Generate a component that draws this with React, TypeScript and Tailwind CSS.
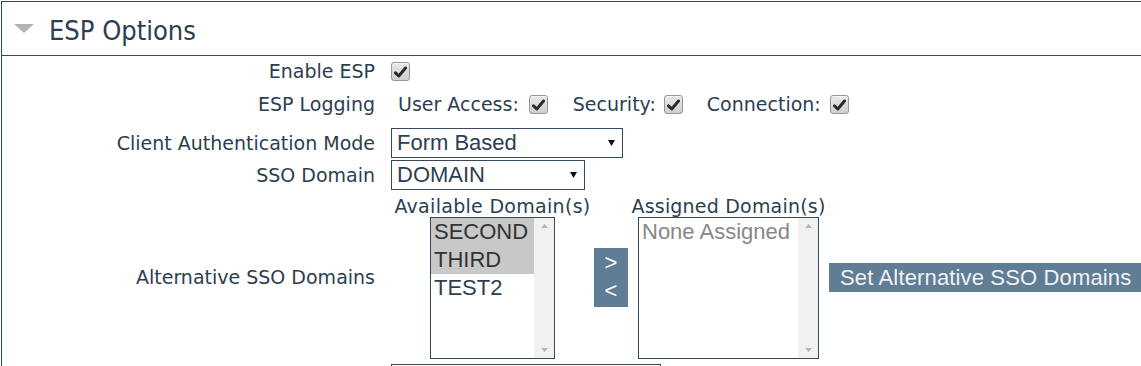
import * as React from 'react';

const LABEL_FONT = { fontFamily: '"DejaVu Sans", Verdana, sans-serif' };
const ARIAL = { fontFamily: '"Liberation Sans", Arial, sans-serif' };

function Check() {
  return (
    <span className="inline-flex h-[19px] w-[19px] items-center justify-center rounded-[3px] border border-[#969696] bg-gradient-to-b from-[#e9e9e9] to-[#d0d0d0] shadow-[inset_0_1px_0_#f6f6f6]">
      <svg width="13" height="12" viewBox="0 0 13 12">
        <path
          d="M1.5 6.8 L4.8 10 L11.5 2"
          fill="none"
          stroke="#2b2b2b"
          strokeWidth="3"
          strokeLinecap="round"
          strokeLinejoin="round"
        />
      </svg>
    </span>
  );
}

function Select({ value, width }: { value: string; width: string }) {
  return (
    <div
      className={`${width} flex h-[30px] items-center justify-between border border-[#34495e] bg-white pl-[5px] pr-[7px] text-[22px] leading-[28px] text-[#2c3e50]`}
      style={ARIAL}
    >
      <span>{value}</span>
      <svg width="7" height="6" viewBox="0 0 7 6">
        <path d="M0 0 H7 L3.5 6 Z" fill="#111" />
      </svg>
    </div>
  );
}

function ListBox({
  width,
  items,
  selected = [],
  muted = false,
}: {
  width: string;
  items: string[];
  selected?: string[];
  muted?: boolean;
}) {
  return (
    <div className={`${width} flex h-[142px] border border-[#34495e] bg-white`} style={ARIAL}>
      <div className="flex-1">
        {items.map((it) => (
          <div
            key={it}
            className={`h-[28px] pl-[3px] text-[22px] leading-[28px] ${
              selected.includes(it) ? 'bg-[#c8c8c8] text-[#333]' : ''
            } ${muted ? 'text-[#888]' : 'text-[#2c3e50]'}`}
          >
            {it}
          </div>
        ))}
      </div>
      <div className="flex w-[20px] flex-col items-center justify-between bg-[#f1f1f1] py-[6px]">
        <svg width="7" height="4" viewBox="0 0 7 4">
          <path d="M0 4 L3.5 0 L7 4 Z" fill="#b4b4b4" />
        </svg>
        <svg width="7" height="4" viewBox="0 0 7 4">
          <path d="M0 0 H7 L3.5 4 Z" fill="#b4b4b4" />
        </svg>
      </div>
    </div>
  );
}

function Row({
  label,
  className,
  children,
}: {
  label: string;
  className: string;
  children?: React.ReactNode;
}) {
  return (
    <div className={`flex items-center ${className}`}>
      <div className="w-[373px] shrink-0 text-right">{label}</div>
      <div className="ml-[16px] flex items-center">{children}</div>
    </div>
  );
}

export default function App() {
  return (
    <div
      className="h-[366px] w-[1141px] overflow-hidden bg-white text-[19px] text-[#2c3e50]"
      style={LABEL_FONT}
    >
      <div className="ml-px mt-px w-[1170px] border-l border-t border-[#34495e]">
        {/* header */}
        <div className="flex h-[54px] items-center border-b border-[#34495e] pl-[12px]">
          <svg width="20" height="9" viewBox="0 0 20 9" className="mb-[1px]">
            <path d="M0 0 H20 L10 9 Z" fill="#b3b3b3" />
          </svg>
          <span
            className="ml-[15px] pt-[6px] text-[27px] text-[#2c3e50]"
            style={{ fontFamily: '"DejaVu Sans Condensed", "DejaVu Sans", sans-serif' }}
          >
            ESP Options
          </span>
        </div>

        <Row label="Enable ESP" className="h-[31px]">
          <Check />
        </Row>

        <Row label="ESP Logging" className="h-[34px]">
          <div className="flex items-center pl-[7px]">
            <span>User Access:</span>
            <span className="ml-[10px]">
              <Check />
            </span>
            <span className="ml-[25px]">Security:</span>
            <span className="ml-[8px]">
              <Check />
            </span>
            <span className="ml-[24px]">Connection:</span>
            <span className="ml-[9px]">
              <Check />
            </span>
          </div>
        </Row>

        <Row label="Client Authentication Mode" className="mt-[7px] h-[30px]">
          <Select value="Form Based" width="w-[232px]" />
        </Row>

        <Row label="SSO Domain" className="mt-[2px] h-[30px]">
          <Select value="DOMAIN" width="w-[194px]" />
        </Row>

        {/* alternative domains */}
        <div className="flex h-[174px] items-center">
          <div className="w-[373px] shrink-0 text-right">Alternative SSO Domains</div>
          <div className="ml-[16px] flex h-full items-center">
            <div className="flex w-[203px] flex-col items-center self-start">
              <div className="h-[27px] whitespace-nowrap leading-[32px] tracking-[0.3px]">Available Domain(s)</div>
              <ListBox width="w-[125px]" items={['SECOND', 'THIRD', 'TEST2']} selected={['SECOND', 'THIRD']} />
            </div>
            <div
              className="flex h-[59px] w-[34px] flex-col items-center justify-center bg-[#5f7d95] text-[22px] leading-[28px] text-white"
              style={ARIAL}
            >
              <span>&gt;</span>
              <span>&lt;</span>
            </div>
            <div className="flex w-[201px] flex-col items-center self-start">
              <div className="h-[27px] whitespace-nowrap leading-[32px] tracking-[0.2px]">Assigned Domain(s)</div>
              <ListBox width="w-[181px]" items={['None Assigned']} muted />
            </div>
            <div
              className="flex h-[29px] w-[312px] items-center whitespace-nowrap bg-[#5f7d95] pl-[11px] text-[22px] tracking-[0.15px] text-[#f2f2f2]"
              style={ARIAL}
            >
              Set Alternative SSO Domains
            </div>
          </div>
        </div>

        <Row label="" className="h-[30px] items-start">
          <div className="h-[30px] w-[270px] border border-[#34495e]" />
        </Row>
      </div>
    </div>
  );
}
